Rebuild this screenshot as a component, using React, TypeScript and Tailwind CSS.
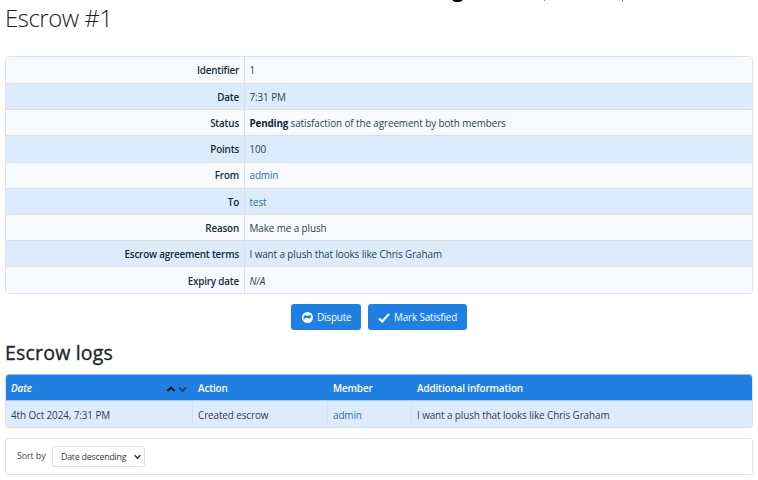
import React from "react";

type Row = { label: string; value: React.ReactNode };

const rows: Row[] = [
  { label: "Identifier", value: "1" },
  { label: "Date", value: "7:31 PM" },
  {
    label: "Status",
    value: (
      <>
        <b className="font-bold tracking-[-0.18px] text-[#152536]">Pending</b> satisfaction of the agreement by both members
      </>
    ),
  },
  { label: "Points", value: "100" },
  { label: "From", value: <a className="text-[#2a6cb0]">admin</a> },
  { label: "To", value: <a className="text-[#2a6cb0]">test</a> },
  { label: "Reason", value: "Make me a plush" },
  { label: "Escrow agreement terms", value: "I want a plush that looks like Chris Graham" },
  { label: "Expiry date", value: <i>N/A</i> },
];

export default function App() {
  return (
    <div className="relative h-[480px] w-[758px] overflow-hidden bg-white px-[5px] font-['Open_Sans','Noto_Sans',sans-serif] text-[9.9px] leading-[14px] tracking-[-0.09px] text-[#2c3e50]">
      <div className="absolute -top-[6px] left-[452px] h-[7.5px] w-[11px] rounded-full bg-black" />
      <div className="absolute left-[544px] top-0 h-px w-px bg-[#5585bb]" />
      <div className="absolute left-[622px] top-0 h-px w-px bg-[#2a6cb0]" />

      <h1 className="h-[56px] pt-px text-[24px] font-light leading-[34px] tracking-[-0.5px] text-[#222]">Escrow #1</h1>

      <div className="h-[238px] w-[748px] overflow-hidden rounded-[4px] border border-[#dee2e6]">
        {rows.map((r, i) => (
          <div
            key={r.label}
            className={`flex border-[#dddfe1] ${i === 0 ? "h-[27px]" : "h-[26.2px]"} ${i === 8 ? "" : "border-b"} ${i % 2 ? "bg-[#dcecfd]" : "bg-[#f7fbff]"}`}
          >
            <div className="flex w-[239px] items-center justify-end border-r border-[#dddfe1] pr-[5px] pt-[0.5px] font-semibold tracking-[-0.2px] text-[#152b3c]">
              {r.label}
            </div>
            <div className="flex items-center whitespace-pre pl-[4.5px] pt-[0.5px]">
              <span>{r.value}</span>
            </div>
          </div>
        ))}
      </div>

      <div className="mt-[10px] flex h-[26px] justify-center gap-[7px] tracking-[-0.15px] text-white">
        <button className="flex w-[70px] items-center rounded-[3px] bg-[#2080e2] pl-[11px]">
          <svg className="mr-[4px] mt-px h-[11px] w-[11px]" viewBox="0 0 11 11">
            <circle cx="5.5" cy="5.5" r="5.5" fill="white" />
            <path d="M1.6 7.6V4.4C3.2 2.6 4.6 3.6 5.9 3.6c1-.1 1.6-.5 3.3-.3l-.5 3C7.6 7 6.5 6.2 5.3 5.9 4 5.6 3 6 2.5 6.6L2.3 7.9Z" fill="#2080e2" />
          </svg>
          Dispute
        </button>
        <button className="flex w-[99px] items-center rounded-[3px] bg-[#2080e2] pl-[10px]">
          <svg className="mr-[4px] mt-px h-[10px] w-[12px]" viewBox="0 0 12 10">
            <path d="M1 5.5 4.2 8.5 11 1" fill="none" stroke="white" strokeWidth="2.1" />
          </svg>
          Mark Satisfied
        </button>
      </div>

      <h2 className="h-[44px] pt-[9px] text-[19.5px] font-medium leading-[28px] tracking-[0.2px] text-[#212529] [-webkit-text-stroke:0.35px_#212529]">Escrow logs</h2>

      <div className="h-[54px] w-[748px] overflow-hidden rounded-[4px] border border-[#dddfe1] border-t-[#8fbdec] bg-[#dcecfd]">
        <div className="-mx-px grid h-[26px] grid-cols-[188px_135px_84px_341px] items-center border-b border-[#a5c8ec] bg-[#2080e2] font-semibold tracking-[-0.12px] text-white">
          <div className="flex items-center pl-[6px] italic">
            Date
            <svg className="ml-auto mr-[6px] mt-[2px] h-[8px] w-[21px]" viewBox="0 0 21 8" fill="none" strokeWidth="1.9">
              <path d="M1.5 6 5 2.5 8.5 6" stroke="#000d1a" />
              <path d="M13 2.5 16.5 6 20 2.5" stroke="#0e4079" />
            </svg>
          </div>
          <div className="pl-[5px]">Action</div>
          <div className="pl-[5px]">Member</div>
          <div className="pl-[5px]">Additional information</div>
        </div>
        <div className="-mx-px grid h-[26px] grid-cols-[188px_135px_84px_341px]">
          <div className="flex items-center border-r border-[#dddfe1] pl-[6px] pt-px">4th Oct 2024, 7:31 PM</div>
          <div className="flex items-center border-r border-[#dddfe1] pl-[5px] pt-px">Created escrow</div>
          <div className="flex items-center border-r border-[#dddfe1] pl-[5px] pt-px text-[#2a6cb0]">admin</div>
          <div className="flex items-center pl-[5px] pt-px">I want a plush that looks like Chris Graham</div>
        </div>
      </div>

      <div className="mt-[10px] flex h-[37px] w-[748px] rounded-[3px] border border-[#dee2e6] pl-[11px] pt-[7px] text-[8.9px] text-[#444]">
        <span className="w-[35px] pt-[3px]">Sort by</span>
        <div className="flex h-[21px] w-[93px] items-center rounded-[3px] border border-[#dddfe1] pl-[8px] tracking-[-0.25px] text-[#343a40]">
          Date descending
          <svg className="ml-auto mr-[3px] h-[6px] w-[7px]" viewBox="0 0 7 6" fill="none">
            <path d="M.7 1.3 3.5 4.2 6.3 1.3" stroke="#222" strokeWidth="1.3" />
          </svg>
        </div>
      </div>
    </div>
  );
}
